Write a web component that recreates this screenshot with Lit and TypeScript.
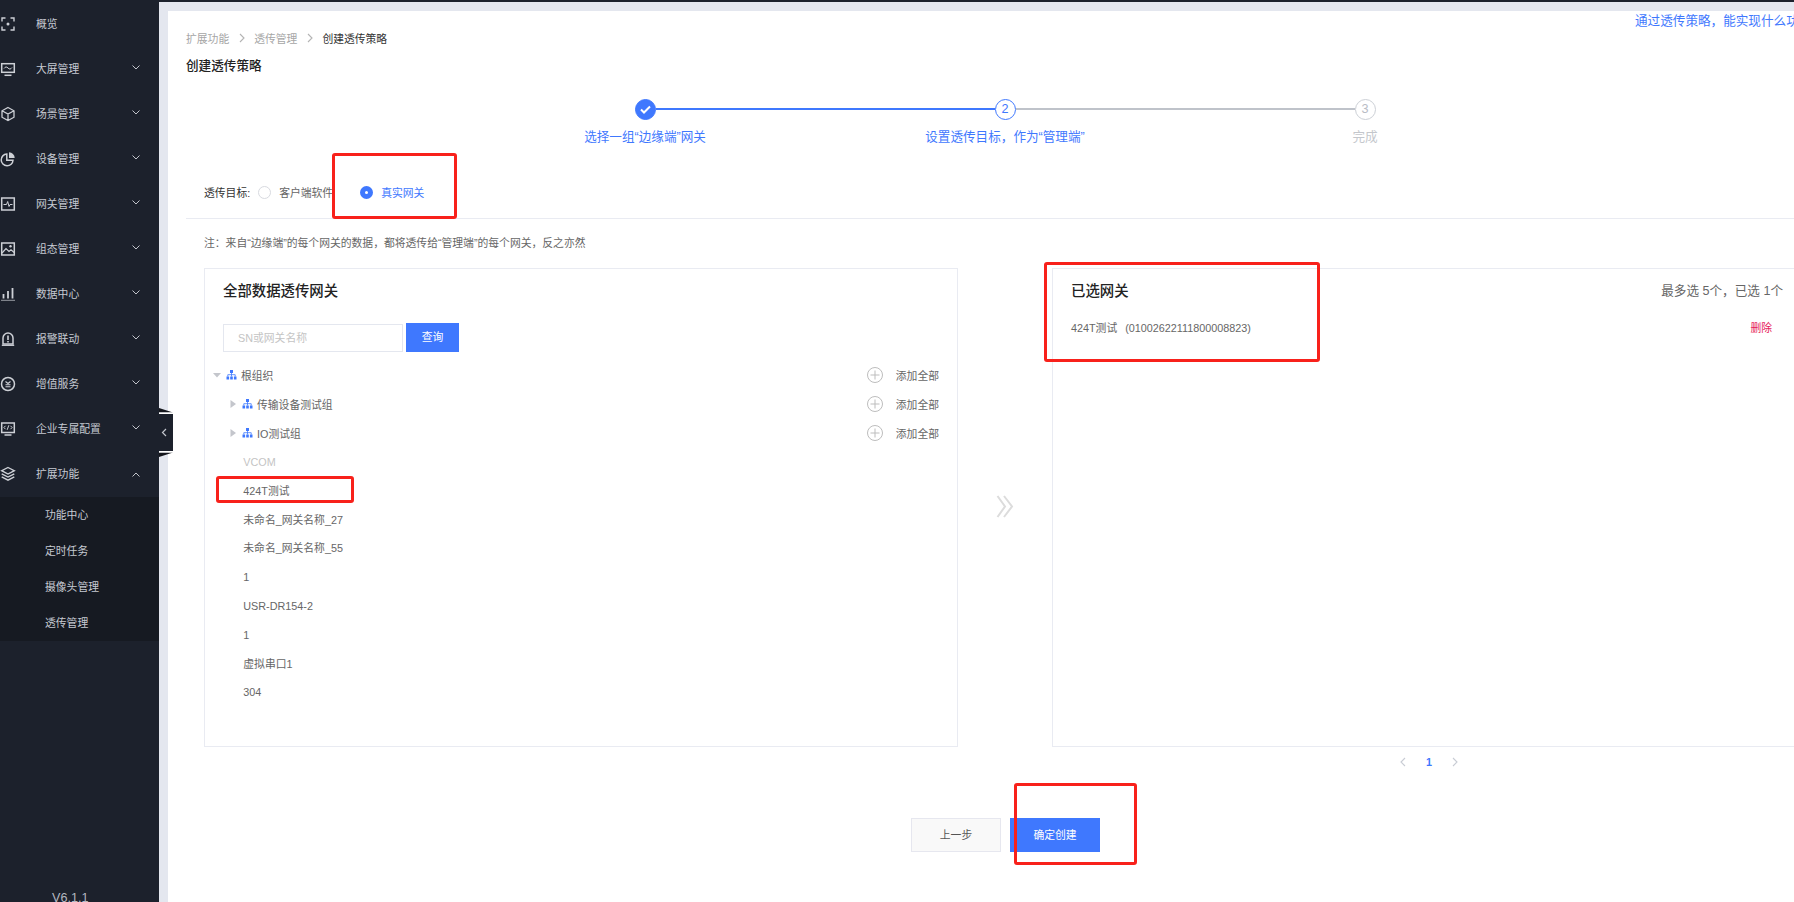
import {LitElement, html, css, svg} from 'lit';
import {customElement} from 'lit/decorators.js';

const ICONS: Record<string, unknown> = {
    overview: svg`<path d="M5.5 2H2v3.500M10.500 2H14v3.500M14 10.500V14h-3.500M5.500 14H2v-3.500" fill="none" stroke="currentColor" stroke-width="1.4"/><circle cx="8" cy="8" r="1.5" fill="currentColor"/>`,
    screen: svg`<rect x="1.7" y="2.7" width="12.6" height="8.6" fill="none" stroke="currentColor" stroke-width="1.5"/><path d="M4 7.500c1.500-2 2.500-2 4-.5s2.500 1.500 4-.5" fill="none" stroke="currentColor"/><path d="M4.500 14.300h7" stroke="currentColor" stroke-width="1.500"/>`,
    cube: svg`<path d="M8 1.500l6 3.300v6.400l-6 3.300-6-3.300V4.800zM2 4.800l6 3.300 6-3.300M8 8.100v6.400" fill="none" stroke="currentColor" stroke-width="1.300"/>`,
    pie: svg`<path d="M6.800 3A5.900 5.900 0 1 0 13 9.200H6.800z" fill="none" stroke="currentColor" stroke-width="1.500"/><path d="M9 1.300a5.800 5.800 0 0 1 5.700 5.700H9z" fill="currentColor"/>`,
    pulse: svg`<rect x="1.700" y="2" width="12.600" height="12" fill="none" stroke="currentColor" stroke-width="1.500"/><path d="M3.500 8.500h3l1.200-3 1.300 5 1-2h2.500" fill="none" stroke="currentColor"/>`,
    image: svg`<rect x="1.700" y="2" width="12.600" height="12" fill="none" stroke="currentColor" stroke-width="1.500"/><path d="M2 12l4-4.500 3 3 2-1.800 3.500 3" fill="none" stroke="currentColor" stroke-width="1.200"/><circle cx="10.500" cy="5.300" r="1.200" fill="currentColor"/>`,
    bars: svg`<path d="M3.500 12.500V8M8 12.500V5M12.500 12.500V2" stroke="currentColor" stroke-width="1.800"/><path d="M1 14.300h14" stroke="currentColor" stroke-width=".7"/>`,
    alarm: svg`<path d="M3 13V7a5 5 0 0 1 10 0v6z" fill="none" stroke="currentColor" stroke-width="1.500"/><path d="M1.800 14.300h12.400" stroke="currentColor" stroke-width="1.300"/><path d="M8 4.500v4.500M8 10v1.500" stroke="currentColor" stroke-width="1.600"/>`,
    coin: svg`<circle cx="8" cy="8" r="6.500" fill="none" stroke="currentColor" stroke-width="1.500"/><path d="M5.500 5.500L8 7.500l2.500-2M5.500 8.700h5M5.500 10.800h5" fill="none" stroke="currentColor" stroke-width="1.100"/>`,
    code: svg`<rect x="1.700" y="2" width="12.600" height="9.500" fill="none" stroke="currentColor" stroke-width="1.500"/><path d="M5.500 4.800L3.900 6.500l1.600 1.700M10.500 4.800l1.600 1.700-1.600 1.700M8.800 4.300L7.200 8.800" fill="none" stroke="currentColor"/><path d="M4.500 14h7" stroke="currentColor" stroke-width="1.500"/>`,
    layers: svg`<path d="M8 1.500l6.300 3.200L8 8 1.700 4.700z" fill="none" stroke="currentColor" stroke-width="1.400"/><path d="M1.700 7.800L8 11l6.300-3.200M1.700 10.900L8 14.200l6.300-3.300" fill="none" stroke="currentColor" stroke-width="1.400"/>`,
};

const MENU = [
    {icon: 'overview', label: '概览', arrow: ''},
    {icon: 'screen', label: '大屏管理', arrow: 'down'},
    {icon: 'cube', label: '场景管理', arrow: 'down'},
    {icon: 'pie', label: '设备管理', arrow: 'down'},
    {icon: 'pulse', label: '网关管理', arrow: 'down'},
    {icon: 'image', label: '组态管理', arrow: 'down'},
    {icon: 'bars', label: '数据中心', arrow: 'down'},
    {icon: 'alarm', label: '报警联动', arrow: 'down'},
    {icon: 'coin', label: '增值服务', arrow: 'down'},
    {icon: 'code', label: '企业专属配置', arrow: 'down'},
    {icon: 'layers', label: '扩展功能', arrow: 'up'},
];
const SUB_MENU = ['功能中心', '定时任务', '摄像头管理', '透传管理'];
const GROUPS = [
    {label: '根组织', level: 'root'},
    {label: '传输设备测试组', level: 'child'},
    {label: 'IO测试组', level: 'child'},
];
const LEAVES = ['424T测试', '未命名_网关名称_27', '未命名_网关名称_55', '1', 'USR-DR154-2', '1', '虚拟串口1', '304'];
const STEPS = [
    {label: '选择一组“边缘端”网关', state: 'done'},
    {label: '设置透传目标，作为“管理端”', state: 'active'},
    {label: '完成', state: 'todo'},
];

@customElement('app-root')
export class AppRoot extends LitElement {
    static styles = css`
        :host {
            display: flex;
            position: relative;
            width: 1794px;
            height: 902px;
            overflow: hidden;
            font-family: "Liberation Sans", "Noto Sans CJK SC", sans-serif;
            font-size: 10.8px;
            color: #666;
            background: #e4e7ef;
        }
        .sidebar {
            flex: none;
            width: 159px;
            height: 902px;
            padding-top: 1.5px;
            box-sizing: border-box;
            overflow: hidden;
            background: #1c212c;
            color: #c6cad2;
        }
        .menu-row {
            display: flex;
            align-items: center;
            height: 45px;
        }
        .menu-label { padding-bottom: 2px; }
        .menu-icon {
            flex: none;
            width: 16px;
            height: 16px;
            margin-right: 20px;
            color: #cdd0d6;
        }
        .menu-arrow {
            margin-left: auto;
            margin-right: 19px;
            width: 8px;
            height: 5px;
        }
        .menu-arrow.down { margin-bottom: 3px; }
        .sub-menu { background: #161a22; }
        .sub-row {
            height: 36px;
            line-height: 36px;
            padding-left: 45px;
        }
        .version {
            margin-top: 247px;
            padding-left: 52px;
            line-height: 20px;
            font-size: 12.6px;
            color: #b4b8c0;
        }
        .collapse {
            position: absolute;
            left: 159px;
            top: 408px;
            width: 14px;
            height: 49px;
        }
        .main {
            flex: 1;
            min-width: 0;
        }
        .top-strip {
            height: 2px;
            background: #1c212c;
        }
        .panel {
            position: relative;
            height: 891px;
            margin: 9px 0 0 9px;
            padding: 17px 0 0 18px;
            box-sizing: border-box;
            overflow: hidden;
            background: #fff;
        }
        .help {
            position: absolute;
            top: 1px;
            left: 1467px;
            line-height: 18px;
            font-size: 12.6px;
            white-space: nowrap;
            color: #3f78fe;
        }
        .crumbs {
            display: flex;
            align-items: center;
            height: 20px;
            color: #a6a6a6;
        }
        .crumbs svg {
            width: 6px;
            height: 10px;
            margin: 0 9.5px;
        }
        .crumbs .current { color: #333; }
        .title {
            margin-top: 8px;
            line-height: 20px;
            font-size: 12.6px;
            font-weight: 500;
            color: #222;
        }
        .steps {
            display: flex;
            margin: 22.5px 0 0 279px;
        }
        .step {
            width: 360px;
            font-size: 12.6px;
            text-align: center;
        }
        .step-head {
            display: flex;
            align-items: center;
            height: 21px;
        }
        .step-line {
            flex: 1;
            height: 2px;
        }
        .step-line.blue { background: #3f78fe; }
        .step-line.gray { background: #bfc3ca; }
        .step-dot {
            flex: none;
            display: flex;
            align-items: center;
            justify-content: center;
            width: 21px;
            height: 21px;
            box-sizing: border-box;
            border-radius: 50%;
            border: 1px solid #3f78fe;
            font-size: 12.6px;
            color: #3f78fe;
        }
        .step-dot.done { background: #3f78fe; }
        .step-dot.todo {
            border-color: #ccd0d6;
            color: #b8bcc4;
        }
        .step-label {
            margin-top: 8.5px;
            line-height: 18px;
            color: #3f78fe;
        }
        .step-label.todo { color: #c4c7cc; }
        .target-row {
            display: flex;
            align-items: center;
            height: 20px;
            margin-top: 36px;
            padding: 0 0 16px 18px;
            border-bottom: 1px solid #e9ebf2;
        }
        .radio {
            flex: none;
            width: 13px;
            height: 13px;
            box-sizing: border-box;
            border-radius: 50%;
            border: 1px solid #d8dae0;
            margin: 0 8px;
        }
        .radio.on {
            border: 5px solid #3f78fe;
            background: #fff;
        }
        .target-label { color: #333; }
        .target-gap { margin-left: 27px; }
        .on-text { color: #3f78fe; }
        .note {
            margin-top: 14px;
            padding-left: 18px;
            line-height: 20px;
        }
        .columns {
            display: flex;
            margin: 15px 0 0 18px;
        }
        .card {
            flex: none;
            height: 479px;
            box-sizing: border-box;
            border: 1px solid #e9ebf2;
            padding: 12px 18px 0;
        }
        .card.left { width: 754px; }
        .card.right { width: 900px; }
        .mid {
            flex: none;
            display: flex;
            align-items: center;
            justify-content: center;
            width: 94px;
            padding-bottom: 3px;
        }
        .card-head {
            display: flex;
            justify-content: space-between;
            line-height: 20px;
        }
        .card-title {
            font-size: 14.4px;
            font-weight: 500;
            color: #222;
        }
        .search {
            display: flex;
            align-items: center;
            margin-top: 22px;
            height: 29px;
        }
        .search-input {
            width: 180px;
            height: 28px;
            box-sizing: border-box;
            border: 1px solid #e4e7ef;
            padding-left: 14px;
            line-height: 26px;
            color: #c4c4c4;
        }
        .search-btn {
            margin-left: 3px;
            width: 53px;
            height: 29px;
            line-height: 29px;
            text-align: center;
            color: #fff;
            background: #3f78fe;
        }
        .tree {
            margin: 8.6px 0 0 -12px;
        }
        .tree-row {
            display: flex;
            align-items: center;
            height: 28.8px;
        }
        .tree-row.child { padding-left: 16px; }
        .caret {
            flex: none;
            width: 12px;
            height: 8px;
            margin-right: 2.5px;
        }
        .org {
            flex: none;
            width: 11px;
            height: 11px;
            margin-right: 4.5px;
        }
        .add {
            display: flex;
            align-items: center;
            margin-left: auto;
        }
        .add svg {
            width: 16px;
            height: 16px;
            margin-right: 13px;
        }
        .leaf {
            height: 28.8px;
            box-sizing: border-box;
            padding: 1px 0 0 32.3px;
            line-height: 28.8px;
        }
        .leaf.off { color: #c4c4c4; }
        .count {
            font-size: 12.6px;
            color: #666;
        }
        .right-head { width: 712px; }
        .picked {
            display: flex;
            justify-content: space-between;
            width: 701px;
            margin-top: 17px;
            line-height: 20px;
        }
        .serial { margin-left: 8px; }
        .remove { color: #e6195a; }
        .pager {
            display: flex;
            align-items: center;
            gap: 20px;
            height: 20px;
            margin: 5px 0 0 1214px;
            font-weight: 700;
            color: #3f78fe;
        }
        .pager svg {
            width: 6px;
            height: 10px;
        }
        .actions {
            display: flex;
            gap: 9px;
            margin: 46px 0 0 725px;
        }
        .btn {
            width: 90px;
            height: 34px;
            line-height: 34px;
            box-sizing: border-box;
            text-align: center;
        }
        .btn.ghost {
            line-height: 32px;
            border: 1px solid #e6e7ef;
            background: #f9f9f9;
            color: #555;
        }
        .btn.primary {
            color: #fff;
            background: #3f78fe;
        }
        .mark {
            position: absolute;
            box-sizing: border-box;
            border: 3px solid #f8211b;
            border-radius: 3px;
            pointer-events: none;
        }
        .mark.radio-mark { left: 332px; top: 153px; width: 125px; height: 66px; }
        .mark.leaf-mark { left: 216px; top: 476px; width: 138px; height: 27px; }
        .mark.picked-mark { left: 1044px; top: 262px; width: 276px; height: 100px; }
        .mark.btn-mark { left: 1014px; top: 783px; width: 123px; height: 82px; }
    `;

    private chevron(dir: string) {
        const d = dir === 'up' ? 'M.5 4.5L4 1l3.5 3.5' : 'M.5 .5L4 4 7.5 .5';
        return html`<svg class="menu-arrow ${dir}" viewBox="0 0 8 5"><path d=${d} fill="none" stroke="#c2c5cc"/></svg>`;
    }

    private pageArrow(d: string, color: string) {
        return html`<svg viewBox="0 0 6 10"><path d=${d} fill="none" stroke=${color} stroke-width="1.1"/></svg>`;
    }

    private renderSidebar() {
        return html`
            <nav class="sidebar">
                ${MENU.map(item => html`
                    <div class="menu-row">
                        <svg class="menu-icon" viewBox="0 0 16 16">${ICONS[item.icon]}</svg>
                        <span class="menu-label">${item.label}</span>
                        ${item.arrow ? this.chevron(item.arrow) : ''}
                    </div>
                `)}
                <div class="sub-menu">
                    ${SUB_MENU.map(label => html`<div class="sub-row">${label}</div>`)}
                </div>
                <div class="version">V6.1.1</div>
            </nav>
        `;
    }

    private renderSteps() {
        return html`
            <div class="steps">
                ${STEPS.map((step, i) => html`
                    <div class="step">
                        <div class="step-head">
                            <span class="step-line ${i === 0 ? '' : i === 1 ? 'blue' : 'gray'}"></span>
                            <span class="step-dot ${step.state}">
                                ${step.state === 'done'
                                    ? html`<svg width="11" height="9" viewBox="0 0 11 9"><path d="M1 4.5l3 3 6-6" fill="none" stroke="#fff" stroke-width="2"/></svg>`
                                    : i + 1}
                            </span>
                            <span class="step-line ${i === 0 ? 'blue' : i === 1 ? 'gray' : ''}"></span>
                        </div>
                        <div class="step-label ${step.state === 'todo' ? 'todo' : ''}">${step.label}</div>
                    </div>
                `)}
            </div>
        `;
    }

    private renderTree() {
        return html`
            <div class="tree">
                ${GROUPS.map(group => html`
                    <div class="tree-row ${group.level}">
                        <svg class="caret" viewBox="0 0 12 8">
                            <path d=${group.level === 'root' ? 'M2 2h8L6 6.5z' : 'M3.5 0v8L9 4z'} fill="#c4c6cc"/>
                        </svg>
                        <svg class="org" viewBox="0 0 11 11">
                            <rect x="4" y="1" width="3" height="3" fill="#3f78fe"/>
                            <rect x=".5" y="7.5" width="2.6" height="3" fill="#3f78fe"/>
                            <rect x="4.2" y="7.5" width="2.6" height="3" fill="#3f78fe"/>
                            <rect x="7.9" y="7.5" width="2.6" height="3" fill="#3f78fe"/>
                            <path d="M5.5 4v3.5M1.8 7.5V5.7h7.400v1.800" fill="none" stroke="#3f78fe" stroke-width=".8"/>
                        </svg>
                        <span>${group.label}</span>
                        <span class="add">
                            <svg viewBox="0 0 16 16">
                                <circle cx="8" cy="8" r="7.5" fill="none" stroke="#bdbdbd"/>
                                <path d="M3.5 8h9M8 3.5v9" stroke="#bdbdbd"/>
                            </svg>
                            添加全部
                        </span>
                    </div>
                `)}
                <div class="leaf off">VCOM</div>
                ${LEAVES.map(label => html`<div class="leaf">${label}</div>`)}
            </div>
        `;
    }

    render() {
        return html`
            ${this.renderSidebar()}
            <div class="main">
                <div class="top-strip"></div>
                <section class="panel">
                    <div class="help">通过透传策略，能实现什么功能</div>
                    <div class="crumbs">
                        <span>扩展功能</span>
                        ${this.pageArrow('M1 1l4 4-4 4', '#b4b4b4')}
                        <span>透传管理</span>
                        ${this.pageArrow('M1 1l4 4-4 4', '#b4b4b4')}
                        <span class="current">创建透传策略</span>
                    </div>
                    <div class="title">创建透传策略</div>
                    ${this.renderSteps()}
                    <div class="target-row">
                        <span class="target-label">透传目标:</span>
                        <span class="radio"></span>
                        <span>客户端软件</span>
                        <span class="radio on target-gap"></span>
                        <span class="on-text">真实网关</span>
                    </div>
                    <div class="note">注：来自“边缘端”的每个网关的数据，都将透传给“管理端”的每个网关，反之亦然</div>
                    <div class="columns">
                        <div class="card left">
                            <div class="card-title card-head">全部数据透传网关</div>
                            <div class="search">
                                <div class="search-input">SN或网关名称</div>
                                <div class="search-btn">查询</div>
                            </div>
                            ${this.renderTree()}
                        </div>
                        <div class="mid">
                            <svg width="18" height="23" viewBox="0 0 18 23">
                                <path d="M1.5 1l7.500 10.500L1.500 22M8 1l8 10.500L8 22" fill="none" stroke="#dcdcdc" stroke-width="2"/>
                            </svg>
                        </div>
                        <div class="card right">
                            <div class="card-head right-head">
                                <span class="card-title">已选网关</span>
                                <span class="count">最多选 5个，已选 1个</span>
                            </div>
                            <div class="picked">
                                <span>424T测试<span class="serial">(01002622111800008823)</span></span>
                                <span class="remove">删除</span>
                            </div>
                        </div>
                    </div>
                    <div class="pager">
                        ${this.pageArrow('M5 1L1 5l4 4', '#c8ccd4')}
                        <span>1</span>
                        ${this.pageArrow('M1 1l4 4-4 4', '#c8ccd4')}
                    </div>
                    <div class="actions">
                        <div class="btn ghost">上一步</div>
                        <div class="btn primary">确定创建</div>
                    </div>
                </section>
            </div>
            <svg class="collapse" viewBox="0 0 14 49">
                <path d="M0 0l14 4.5H0zM0 44.5h14L0 49z" fill="#14161c"/>
                <path d="M0 4.5h14V6H0zM0 43h14v1.500H0z" fill="#fff"/>
                <rect x="0" y="6" width="14" height="37" fill="#1c212c"/>
                <path d="M7 21l-3.500 3.500L7 28" fill="none" stroke="#c2c5cc" stroke-width="1.2"/>
            </svg>
            <div class="mark radio-mark"></div>
            <div class="mark leaf-mark"></div>
            <div class="mark picked-mark"></div>
            <div class="mark btn-mark"></div>
        `;
    }
}
